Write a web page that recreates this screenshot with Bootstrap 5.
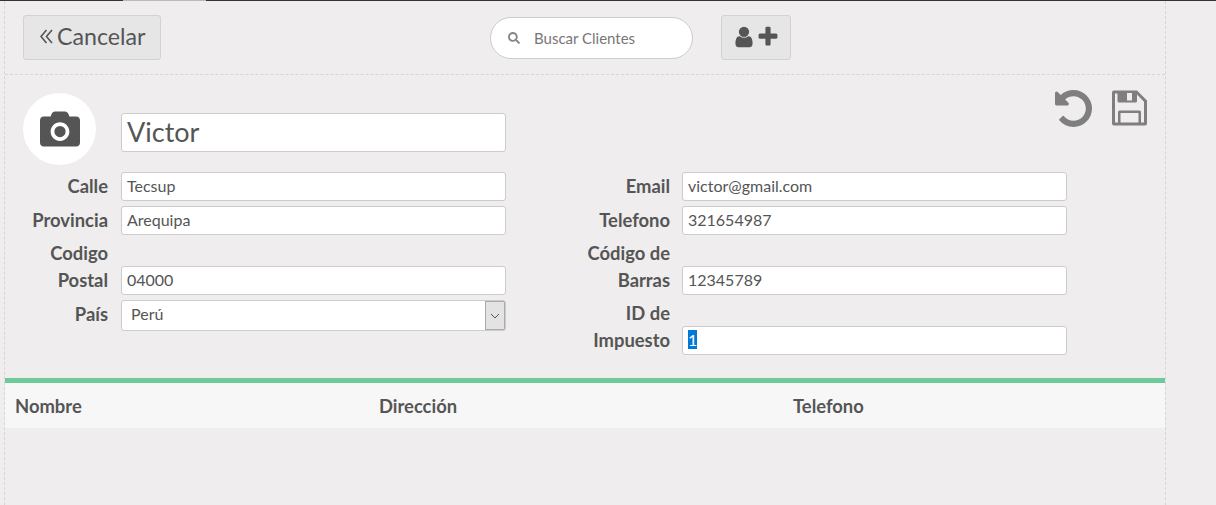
<!DOCTYPE html>
<html lang="es">
<head>
  <meta charset="UTF-8">
  <title>Clientes</title>
  <meta name="viewport" content="width=device-width, initial-scale=1">
  <link href="https://cdn.jsdelivr.net/npm/bootstrap@5.3.3/dist/css/bootstrap.min.css" rel="stylesheet">
  <style>
    html, body { height: 100%; overflow: hidden; }
    body {
      background: #efeded;
      color: #555;
      font-family: Lato, "Liberation Sans", sans-serif;
    }
    .top-line { height: 1px; background: #333; }
    .top-line span { display: block; width: 83px; height: 1px; margin-left: 123px; background: #bbb; }
    .panel-box {
      width: 1162px;
      height: 504px;
      margin-left: 4px;
      border-left: 1px dashed #d6d6d6;
      border-right: 1px dashed #d6d6d6;
    }
    .tool-bar { height: 74px; padding: 14px 0 0 18px; border-bottom: 1px dashed #d6d6d6; }
    .btn-tool {
      height: 45px;
      background: #e6e6e6;
      border: 1px solid #d2d2d2;
      border-radius: 3px;
      color: #555;
    }
    .btn-cancel { width: 138px; padding: 0 0 3px 16px; font-size: 23.2px; line-height: 38px; }
    .btn-add { width: 70px; margin-left: 28px; padding: 0 0 2px; }
    .search-box {
      width: 203px;
      height: 42px;
      margin: 2px 0 0 329px;
      padding: 0 12px 0 17px;
      background: #fff;
      border: 1px solid #ccc;
      border-radius: 21px;
    }
    .search-box input {
      width: 130px;
      margin-left: 14px;
      padding: 0;
      border: 0;
      outline: 0;
      color: #555;
      font-size: 15px;
    }
    .search-box input::placeholder { color: #777; opacity: 1; }
    .client-form { height: 303px; padding: 18px 18px 0 18px; }
    .photo-row { height: 72px; margin-bottom: 7px; }
    .photo-circle { width: 73px; height: 72px; padding-bottom: 1px; background: #fff; border-radius: 50%; }
    .client-form .form-control {
      height: 29px;
      padding: 0 5px 2px;
      background: #fff;
      border: 1px solid #ccc;
      border-radius: 3px;
      box-shadow: none;
      color: #555;
      font-size: 16px;
    }
    .client-form .name-input {
      width: 385px;
      height: 39px;
      margin: 20px 0 0 25px;
      padding-bottom: 0;
      font-size: 27px;
    }
    .photo-actions { margin-top: -3px; gap: 20px; }
    .form-cols { gap: 78px; }
    .form-col { width: 484px; }
    .form-col-right { width: 482px; }
    .field-row { margin-bottom: 5px; }
    .field-row label {
      flex: 0 0 85px;
      padding-bottom: 1px;
      font-size: 18.4px;
      font-weight: 700;
      line-height: 27px;
      text-align: right;
    }
    .form-col .field-row .form-control,
    .form-col .field-row .country-select { width: 385px; margin-left: 13px; }
    .form-col-right .field-row .form-control { margin-left: 12px; }
    .field-row .country-select {
      height: 31px;
      padding: 0 24px 3px 9px;
      border: 1px solid #ccc;
      border-radius: 3px;
      box-shadow: none;
      color: #555;
      font-size: 16px;
      background-size: 20px 29px;
      background-position: right center;
      background-image: url("data:image/svg+xml,%3Csvg xmlns='http://www.w3.org/2000/svg' viewBox='0 0 20 29'%3E%3Crect x='.5' y='.5' width='19' height='28' fill='%23e3e3e3' stroke='%23aaa'/%3E%3Cpath d='M6 13l4 4 4-4' fill='none' stroke='%23555'/%3E%3C/svg%3E");
    }
    .row-select label { padding-bottom: 3px; }
    #taxId::selection { background: #0078d7; color: #fff; }
    .client-table { margin: 0; border-top: 5px solid #6ec99b; }
    .client-table th {
      height: 47px;
      padding: 3px 0 0 10px;
      background: #f7f7f7;
      border: 0;
      color: #555;
      font-size: 18.4px;
      font-weight: 700;
      vertical-align: middle;
    }
    .client-table .col-name { width: 364px; }
    .client-table .col-address { width: 414px; }
  </style>
</head>
<body>
  <div class="top-line"><span></span></div>
  <div class="panel-box">

    <div class="tool-bar d-flex align-items-start">
      <button type="button" class="btn btn-tool btn-cancel d-flex align-items-center gap-1">
        <svg width="13" height="15" viewBox="0 0 13 15" fill="none" stroke="#555" stroke-width="1.6"><path d="M6.500 1L1 7.500 6.500 14M12 1L6.500 7.500 12 14"/></svg>
        Cancelar
      </button>
      <div class="search-box d-flex align-items-center">
        <svg width="12" height="12" viewBox="0 0 512 512" fill="#888"><path d="M505 442.700L405.300 343c-4.500-4.500-10.600-7-17-7H372c27.600-35.300 44-79.700 44-128C416 93.100 322.900 0 208 0S0 93.100 0 208s93.100 208 208 208c48.300 0 92.700-16.400 128-44v16.300c0 6.400 2.500 12.500 7 17l99.700 99.700c9.400 9.400 24.600 9.400 33.900 0l28.300-28.300c9.400-9.400 9.400-24.600.1-34zM208 336c-70.700 0-128-57.200-128-128 0-70.700 57.200-128 128-128 70.700 0 128 57.200 128 128 0 70.700-57.200 128-128 128z"/></svg>
        <input type="text" placeholder="Buscar Clientes">
      </div>
      <button type="button" class="btn btn-tool btn-add d-flex align-items-center justify-content-center">
        <svg width="24" height="24" viewBox="0 0 1792 1792" fill="#555"><path d="M1536 1399q0 109-62.500 187t-150.500 78h-854q-88 0-150.500-78t-62.500-187q0-85 8.500-160.500t31.500-152 58.500-131 94-89 134.500-34.500q131 128 313 128t313-128q76 0 134.500 34.500t94 89 58.500 131 31.500 152 8.500 160.500zm-256-887q0 159-112.500 271.500t-271.500 112.500-271.500-112.500-112.500-271.500 112.500-271.500 271.500-112.500 271.500 112.500 112.500 271.500z"/></svg>
        <svg width="24" height="24" viewBox="0 0 1792 1792" fill="#555"><path d="M1600 736v192q0 40-28 68t-68 28h-416v416q0 40-28 68t-68 28h-192q-40 0-68-28t-28-68v-416h-416q-40 0-68-28t-28-68v-192q0-40 28-68t68-28h416v-416q0-40 28-68t68-28h192q40 0 68 28t28 68v416h416q40 0 68 28t28 68z"/></svg>
      </button>
    </div>

    <form class="client-form">
      <div class="photo-row d-flex align-items-start">
        <div class="photo-circle d-flex align-items-center justify-content-center">
          <svg width="40" height="40" viewBox="0 0 512 512" fill="#555" fill-rule="evenodd"><path d="M512 144v288c0 26.500-21.500 48-48 48H48c-26.500 0-48-21.500-48-48V144c0-26.500 21.500-48 48-48h88l12.300-32.900c7-18.700 24.900-31.100 44.900-31.100h125.500c20 0 37.900 12.400 44.900 31.100L376 96h88c26.500 0 48 21.500 48 48zM376 288c0-66.200-53.800-120-120-120s-120 53.800-120 120 53.800 120 120 120 120-53.800 120-120zM328 288a72 72 0 1 1-144 0 72 72 0 0 1 144 0z"/></svg>
        </div>
        <input type="text" class="form-control name-input" value="Victor">
        <div class="photo-actions d-flex ms-auto">
          <svg width="37" height="37" viewBox="0 128 1536 1536" fill="#7f7f7f"><path d="M1536 896q0 156-61 298t-164 245-245 164-298 61q-172 0-327-72.500t-264-204.500q-7-10-6.500-22.500t8.500-20.500l137-138q10-9 25-9 16 2 23 12 73 95 179 147t225 52q104 0 198.500-40.500t163.500-109.500 109.500-163.500 40.500-198.500-40.500-198.500-109.500-163.500-163.500-109.500-198.500-40.500q-98 0-188 35.500t-160 101.500l137 138q31 30 14 69-17 40-59 40h-448q-26 0-45-19t-19-45v-448q0-42 40-59 39-17 69 14l130 129q107-101 244.500-156.500t284.500-55.500q156 0 298 61t245 164 164 245 61 298z"/></svg>
          <svg width="35" height="36" viewBox="0 0 35 35" fill="#7f7f7f" fill-rule="evenodd"><path d="M2 0h23l10 10v23a2 2 0 0 1-2 2H2a2 2 0 0 1-2-2V2a2 2 0 0 1 2-2zM3 3h2.500v7.500A1.500 1.500 0 0 0 7 12h16.500a1.500 1.500 0 0 0 1.500-1.500V4l7 7.200V32h-3V21.500a1.500 1.500 0 0 0-1.500-1.500H7.500A1.500 1.500 0 0 0 6 21.500V32H3zM15 2.500V10h5V2.500zM8.500 22.500V32h18v-9.500z"/></svg>
        </div>
      </div>

      <div class="form-cols d-flex align-items-start">
        <div class="form-col">
          <div class="field-row d-flex align-items-end">
            <label for="street">Calle</label>
            <input id="street" type="text" class="form-control" value="Tecsup">
          </div>
          <div class="field-row d-flex align-items-end">
            <label for="state">Provincia</label>
            <input id="state" type="text" class="form-control" value="Arequipa">
          </div>
          <div class="field-row d-flex align-items-end">
            <label for="zip">Codigo Postal</label>
            <input id="zip" type="text" class="form-control" value="04000">
          </div>
          <div class="field-row row-select d-flex align-items-end">
            <label for="country">País</label>
            <select id="country" class="form-select country-select">
              <option>Perú</option>
            </select>
          </div>
        </div>
        <div class="form-col-right">
          <div class="field-row d-flex align-items-end">
            <label for="email">Email</label>
            <input id="email" type="text" class="form-control" value="victor@gmail.com">
          </div>
          <div class="field-row d-flex align-items-end">
            <label for="phone">Telefono</label>
            <input id="phone" type="text" class="form-control" value="321654987">
          </div>
          <div class="field-row d-flex align-items-end">
            <label for="barcode">Código de Barras</label>
            <input id="barcode" type="text" class="form-control" value="12345789">
          </div>
          <div class="field-row d-flex align-items-end">
            <label for="taxId">ID de Impuesto</label>
            <input id="taxId" type="text" class="form-control" value="1">
          </div>
        </div>
      </div>
    </form>

    <table class="table client-table">
      <thead>
        <tr>
          <th class="col-name">Nombre</th>
          <th class="col-address">Dirección</th>
          <th>Telefono</th>
        </tr>
      </thead>
    </table>
  </div>

  <script>
    const taxId = document.getElementById("taxId");
    taxId.focus();
    taxId.select();
  </script>
  <script src="https://cdn.jsdelivr.net/npm/bootstrap@5.3.3/dist/js/bootstrap.bundle.min.js"></script>
</body>
</html>
